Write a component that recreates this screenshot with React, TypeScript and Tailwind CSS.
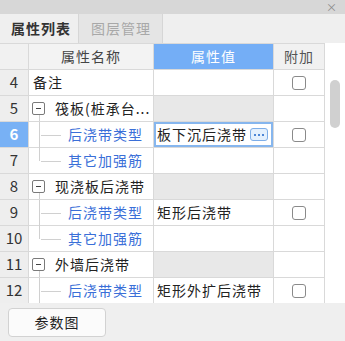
import React from "react";

type Row =
  | { n: number; kind: "plain"; name: string; value: string; check: boolean }
  | { n: number; kind: "group"; name: string }
  | { n: number; kind: "child"; name: string; value: string; check: boolean; last: boolean; selected?: boolean };

const rows: Row[] = [
  { n: 4, kind: "plain", name: "备注", value: "", check: true },
  { n: 5, kind: "group", name: "筏板(桩承台..." },
  { n: 6, kind: "child", name: "后浇带类型", value: "筏板下沉后浇带", check: true, last: false, selected: true },
  { n: 7, kind: "child", name: "其它加强筋", value: "", check: false, last: true },
  { n: 8, kind: "group", name: "现浇板后浇带" },
  { n: 9, kind: "child", name: "后浇带类型", value: "矩形后浇带", check: true, last: false },
  { n: 10, kind: "child", name: "其它加强筋", value: "", check: false, last: true },
  { n: 11, kind: "group", name: "外墙后浇带" },
  { n: 12, kind: "child", name: "后浇带类型", value: "矩形外扩后浇带", check: true, last: false },
];

function Check() {
  return <div className="w-[14px] h-[14px] rounded-[3px] border border-[#8a8a8a] bg-white" />;
}

function NumCell({ n, selected }: { n: number; selected?: boolean }) {
  return (
    <div
      className={
        "h-[26px] flex items-center justify-center border-r border-b border-[#d9d9d9] text-[15px] tracking-normal " +
        (selected ? "bg-[#78b1f5] text-white font-bold" : "bg-[#eeeeee] text-[#333]")
      }
    >
      {n}
    </div>
  );
}

export default function App() {
  return (
    <div
      className="w-[345px] h-[341px] bg-[#efefef] flex flex-col text-[14px] tracking-[1px] text-[#222] overflow-hidden"
      style={{ fontFamily: '"Noto Sans CJK SC", "Noto Sans", sans-serif' }}
    >
      <div className="h-[14px] bg-[#d7d7d7] flex items-center justify-end pr-[8px]">
        <span className="text-[11px] leading-none tracking-normal text-[#8a8a8a]">×</span>
      </div>
      <div className="h-[29px] flex items-stretch bg-[#efefef]">
        <div className="w-[79px] flex items-center pl-[11px] font-bold text-[#333] border-r border-[#d6d6d6]">
          属性列表
        </div>
        <div className="w-[84px] flex items-center pl-[12px] text-[#a8a8a8] bg-[#e5e5e5] border-r border-[#d6d6d6]">
          图层管理
        </div>
        <div className="flex-1" />
      </div>
      <div className="h-[260px] flex bg-white overflow-hidden">
        <div className="w-[325px] grid grid-cols-[29px_125px_120px_51px] auto-rows-min content-start border-t border-[#d9d9d9]">
          <div className="h-[26px] bg-[#f1f1f1] border-r border-b border-[#d9d9d9]" />
          <div className="h-[26px] bg-[#f3f3f3] border-r border-b border-[#d9d9d9] flex items-center justify-center text-[#444]">
            属性名称
          </div>
          <div className="h-[26px] bg-[#74aef6] border-r border-b border-[#d9d9d9] flex items-center justify-center text-white">
            属性值
          </div>
          <div className="h-[26px] bg-[#f1f1f1] border-r border-b border-[#d9d9d9] flex items-center justify-center text-[#555]">
            附加
          </div>
          {rows.map((r) => {
            if (r.kind === "group") {
              return (
                <React.Fragment key={r.n}>
                  <NumCell n={r.n} />
                  <div className="relative h-[26px] border-r border-b border-[#d9d9d9] flex items-center pl-[3px] whitespace-nowrap overflow-hidden">
                    <div className="absolute left-[10px] top-[19px] bottom-0 w-px bg-[#d0d0d0]" />
                    <div className="relative w-[13px] h-[13px] rounded-[2px] border border-[#7a7a7a] bg-white flex items-center justify-center">
                      <div className="w-[5px] h-px bg-[#444]" />
                    </div>
                    <span className="ml-[10px]">{r.name}</span>
                  </div>
                  <div className="h-[26px] bg-[#e8e8e8] border-r border-b border-[#d9d9d9]" />
                  <div className="h-[26px] border-r border-b border-[#d9d9d9]" />
                </React.Fragment>
              );
            }
            if (r.kind === "plain") {
              return (
                <React.Fragment key={r.n}>
                  <NumCell n={r.n} />
                  <div className="h-[26px] border-r border-b border-[#d9d9d9] flex items-center pl-[4px]">{r.name}</div>
                  <div className="h-[26px] border-r border-b border-[#d9d9d9] flex items-center pl-[3px]">{r.value}</div>
                  <div className="h-[26px] border-r border-b border-[#d9d9d9] flex items-center justify-center">
                    {r.check && <Check />}
                  </div>
                </React.Fragment>
              );
            }
            return (
              <React.Fragment key={r.n}>
                <NumCell n={r.n} selected={r.selected} />
                <div className="relative h-[26px] border-r border-b border-[#d9d9d9] flex items-center pl-[39px] text-[#3a6fd8] whitespace-nowrap">
                  <div
                    className={
                      "absolute left-[10px] top-0 w-px bg-[#d0d0d0] " + (r.last ? "h-[13px]" : "bottom-[-1px]")
                    }
                  />
                  <div className="absolute left-[12px] top-[13px] w-[20px] h-px bg-[#d0d0d0]" />
                  {r.name}
                </div>
                {r.selected ? (
                  <div className="h-[26px] border-r border-b border-[#d9d9d9] flex items-stretch">
                    <div className="flex-1 border-2 border-[#86b6ee] flex items-center overflow-hidden pr-[3px]">
                      <div className="flex-1 overflow-hidden flex justify-end whitespace-nowrap">
                        <span>{r.value}</span>
                      </div>
                      <div className="ml-[3px] w-[18px] h-[13px] rounded-[3px] border border-[#7eaee8] bg-[#e4f0fd] flex items-center justify-center gap-[2px] shrink-0">
                        <div className="w-[2px] h-[2px] bg-[#4d86d6]" />
                        <div className="w-[2px] h-[2px] bg-[#4d86d6]" />
                        <div className="w-[2px] h-[2px] bg-[#4d86d6]" />
                      </div>
                    </div>
                  </div>
                ) : (
                  <div className="h-[26px] border-r border-b border-[#d9d9d9] flex items-center pl-[3px] whitespace-nowrap overflow-hidden">
                    {r.value}
                  </div>
                )}
                <div className="h-[26px] border-r border-b border-[#d9d9d9] flex items-center justify-center">
                  {r.check && <Check />}
                </div>
              </React.Fragment>
            );
          })}
        </div>
        <div className="flex-1 bg-white pl-[5px] pt-[37px]">
          <div className="w-[10px] h-[48px] rounded-[5px] bg-[#d0d0d0]" />
        </div>
      </div>
      <div className="flex-1 pl-[8px] pt-[5px]">
        <div className="w-[98px] h-[29px] rounded-[4px] border border-[#d2d2d2] bg-[#fbfbfb] flex items-center justify-center text-[#222]">
          参数图
        </div>
      </div>
    </div>
  );
}
